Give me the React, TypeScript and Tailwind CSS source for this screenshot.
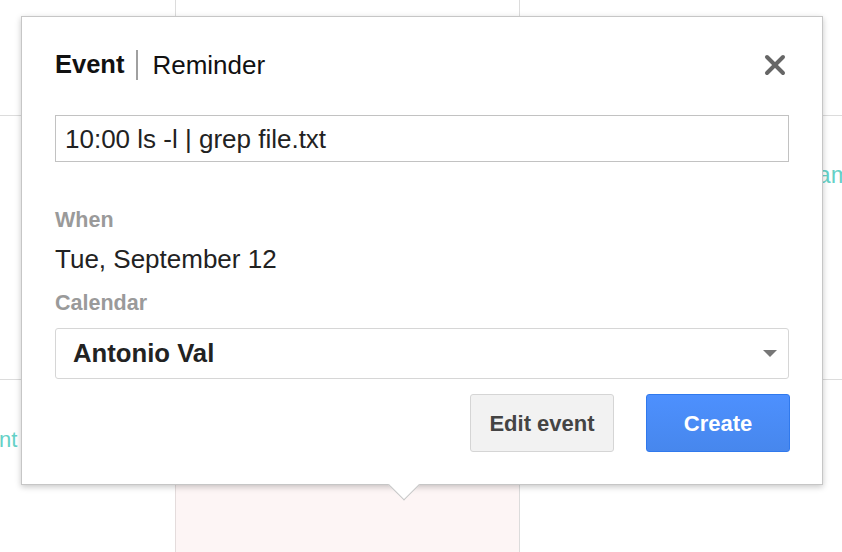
import { X } from 'lucide-react';

function Popup() {
  return (
    <div className="absolute left-[21px] top-[16px] w-[802px] h-[469px] bg-white border border-[#c6c6c6] shadow-[0_2px_6px_rgba(0,0,0,0.22)]">
      <div className="flex flex-col px-[33px] pt-[33px]">
        {/* tabs */}
        <div className="flex items-center h-[30px]">
          <span className="text-[25.5px] leading-none font-bold text-[#111]">Event</span>
          <span className="mx-[12px] w-[2px] h-[30px] bg-[#a0a0a0]" />
          <span className="ml-[2px] text-[26px] leading-none text-[#111]">Reminder</span>
          <button className="ml-auto mr-[-2px] text-[#666]">
            <X size={32} strokeWidth={3} />
          </button>
        </div>

        <div className="mt-[35px] h-[47px] border border-[#c2c2c2] flex items-center pl-[9px]">
          <span className="text-[26px] leading-none text-[#222]">10:00 ls -l | grep file.txt</span>
        </div>

        <div className="mt-[47px] text-[21.5px] leading-[22px] font-bold text-[#9a9a9a]">When</div>
        <div className="mt-[15px] text-[26px] leading-[26px] text-[#222]">Tue, September 12</div>
        <div className="mt-[20px] text-[21.5px] leading-[22px] font-bold text-[#9a9a9a]">Calendar</div>

        <div className="mt-[14px] h-[51px] border-[1.5px] border-[#d6d6d6] rounded-[3px] flex items-center pl-[17px] pr-[11px]">
          <span className="text-[25.7px] leading-none font-bold text-[#222]">Antonio Val</span>
          <svg className="ml-auto" width="14" height="7" viewBox="0 0 14 7">
            <path d="M0 0h14L7 7z" fill="#777" />
          </svg>
        </div>

        <div className="mt-[15px] mr-[-1px] flex justify-end gap-[32px]">
          <button className="w-[144px] h-[58px] rounded-[3px] border border-[#d5d5d5] bg-[#f2f2f2] text-[22px] font-bold text-[#444]">
            Edit event
          </button>
          <button className="w-[144px] h-[58px] rounded-[3px] border border-[#3079ed] bg-gradient-to-b from-[#4d90fe] to-[#4787ed] text-[22px] font-bold text-white">
            Create
          </button>
        </div>
      </div>

      {/* pointer */}
      <div className="absolute left-[371px] -bottom-[12px] w-[22px] h-[22px] rotate-45 bg-white border-r border-b border-[#c6c6c6]" />
    </div>
  );
}

export default function App() {
  return (
    <div className="relative w-[842px] h-[552px] overflow-hidden bg-white font-['Liberation_Sans',Arial,sans-serif]">
      <div className="grid grid-cols-[176px_344px_344px] grid-rows-[116px_264px_264px]">
        <div className="border-r border-b border-[#dcdcdc]" />
        <div className="border-r border-b border-[#dcdcdc]" />
        <div className="border-b border-[#dcdcdc]" />

        <div className="border-r border-b border-[#dcdcdc]" />
        <div className="border-r border-b border-[#dcdcdc]" />
        <div className="border-b border-[#dcdcdc] pt-[47px] pl-[272px] whitespace-nowrap">
          <span className="text-[24px] leading-none text-[#65d1c7]">Team</span>
        </div>

        <div className="border-r border-[#e4dcdc] pt-[49px] -ml-[1px]">
          <span className="text-[22px] leading-none text-[#65d1c7]">nt</span>
        </div>
        <div className="border-r border-[#dcdcdc] bg-[#fdf5f5]" />
        <div />
      </div>
      <Popup />
    </div>
  );
}
